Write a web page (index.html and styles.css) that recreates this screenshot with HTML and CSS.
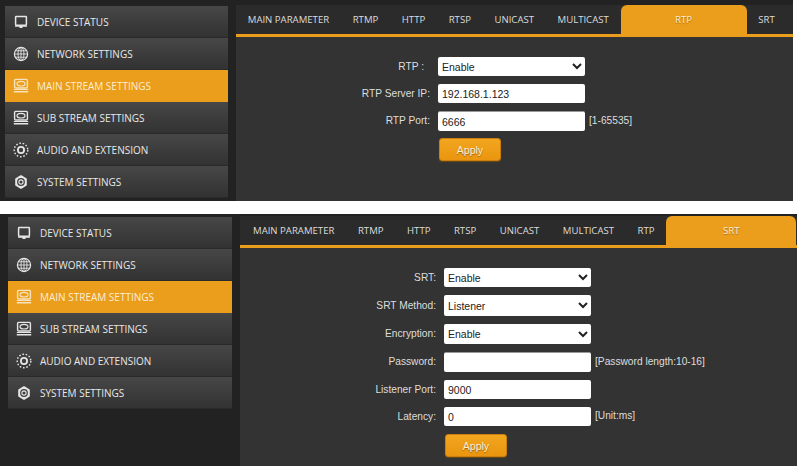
FILE: index.html
```html
<!DOCTYPE html>
<html lang="en">
<head>
<meta charset="utf-8">
<title>Stream settings</title>
<link rel="stylesheet" href="styles.css">
</head>
<body>
<svg class="defs" width="0" height="0" aria-hidden="true">
  <symbol id="i-monitor" viewBox="0 0 16 16">
    <rect x="2.6" y="2.6" width="10.8" height="8.6" rx="0.6" fill="none" stroke="currentColor" stroke-width="1.5"/>
    <path d="M2 11.4h12v1.4H9.5v1.2h-3v-1.2H2z" fill="currentColor"/>
  </symbol>
  <symbol id="i-globe" viewBox="0 0 16 16">
    <g fill="none" stroke="currentColor" stroke-width="0.9">
      <circle cx="8" cy="8" r="6.6" stroke-width="1.2"/>
      <ellipse cx="8" cy="8" rx="3" ry="6.6"/>
      <path d="M8 1.4v13.2M1.4 8h13.2M2.4 4.8h11.2M2.4 11.2h11.2"/>
    </g>
  </symbol>
  <symbol id="i-stream" viewBox="0 0 16 16">
    <rect x="1.6" y="1.4" width="12.8" height="8.6" rx="1" fill="none" stroke="currentColor" stroke-width="1.4"/>
    <ellipse cx="8" cy="5.7" rx="4" ry="2.3" fill="none" stroke="currentColor" stroke-width="1.2"/>
    <path d="M.8 11h14.4v1H.8zM.8 13h14.4v1.5H.8z" fill="currentColor"/>
  </symbol>
  <symbol id="i-audio" viewBox="0 0 16 16">
    <circle cx="8" cy="8" r="3.1" fill="none" stroke="currentColor" stroke-width="1.8"/>
    <circle cx="8" cy="8" r="6.8" fill="none" stroke="currentColor" stroke-width="1.4" stroke-dasharray="1.6 1.75"/>
  </symbol>
  <symbol id="i-gear" viewBox="0 0 16 16">
    <path d="M8 2.2l4.8 2.8v6L8 13.8 3.2 11V5z" fill="currentColor" stroke="currentColor" stroke-width="2" stroke-linejoin="round"/>
    <circle cx="8" cy="8" r="3.9" fill="#3d3d3d"/>
    <circle cx="8" cy="8" r="2.1" fill="none" stroke="currentColor" stroke-width="1.1"/>
  </symbol>
</svg>

<section class="panel panel-rtp">
  <nav class="side">
    <a class="side-item"><svg class="ico"><use href="#i-monitor"/></svg>DEVICE STATUS</a>
    <a class="side-item"><svg class="ico"><use href="#i-globe"/></svg>NETWORK SETTINGS</a>
    <a class="side-item active"><svg class="ico"><use href="#i-stream"/></svg>MAIN STREAM SETTINGS</a>
    <a class="side-item"><svg class="ico"><use href="#i-stream"/></svg>SUB STREAM SETTINGS</a>
    <a class="side-item"><svg class="ico"><use href="#i-audio"/></svg>AUDIO AND EXTENSION</a>
    <a class="side-item"><svg class="ico"><use href="#i-gear"/></svg>SYSTEM SETTINGS</a>
  </nav>
  <div class="main">
    <div class="tabs">
      <a class="tab">MAIN PARAMETER</a>
      <a class="tab">RTMP</a>
      <a class="tab">HTTP</a>
      <a class="tab">RTSP</a>
      <a class="tab">UNICAST</a>
      <a class="tab">MULTICAST</a>
      <a class="tab current">RTP</a>
      <a class="tab">SRT</a>
    </div>
    <form class="form">
      <label class="lab lab-short">RTP :</label>
      <div class="ctl"><select class="field"><option>Enable</option></select></div>
      <label class="lab">RTP Server IP:</label>
      <div class="ctl"><input class="field" value="192.168.1.123"></div>
      <label class="lab">RTP Port:</label>
      <div class="ctl"><input class="field h20 shade" value="6666"><span class="hint">[1-65535]</span></div>
      <div class="ctl apply-cell"><button type="button" class="apply">Apply</button></div>
    </form>
  </div>
</section>

<section class="panel panel-srt">
  <nav class="side">
    <a class="side-item"><svg class="ico"><use href="#i-monitor"/></svg>DEVICE STATUS</a>
    <a class="side-item"><svg class="ico"><use href="#i-globe"/></svg>NETWORK SETTINGS</a>
    <a class="side-item active"><svg class="ico"><use href="#i-stream"/></svg>MAIN STREAM SETTINGS</a>
    <a class="side-item"><svg class="ico"><use href="#i-stream"/></svg>SUB STREAM SETTINGS</a>
    <a class="side-item"><svg class="ico"><use href="#i-audio"/></svg>AUDIO AND EXTENSION</a>
    <a class="side-item"><svg class="ico"><use href="#i-gear"/></svg>SYSTEM SETTINGS</a>
  </nav>
  <div class="main">
    <div class="tabs">
      <a class="tab">MAIN PARAMETER</a>
      <a class="tab">RTMP</a>
      <a class="tab">HTTP</a>
      <a class="tab">RTSP</a>
      <a class="tab">UNICAST</a>
      <a class="tab">MULTICAST</a>
      <a class="tab">RTP</a>
      <a class="tab current">SRT</a>
    </div>
    <form class="form">
      <label class="lab">SRT:</label>
      <div class="ctl"><select class="field"><option>Enable</option></select></div>
      <label class="lab">SRT Method:</label>
      <div class="ctl"><select class="field h21"><option>Listener</option></select></div>
      <label class="lab">Encryption:</label>
      <div class="ctl"><select class="field h20"><option>Enable</option></select></div>
      <label class="lab">Password:</label>
      <div class="ctl"><input class="field h20 shade" value=""><span class="hint">[Password length:10-16]</span></div>
      <label class="lab">Listener Port:</label>
      <div class="ctl"><input class="field" value="9000"></div>
      <label class="lab">Latency:</label>
      <div class="ctl"><input class="field" value="0"><span class="hint">[Unit:ms]</span></div>
      <div class="ctl apply-cell"><button type="button" class="apply">Apply</button></div>
    </form>
  </div>
</section>
</body>
</html>
```

FILE: styles.css
```css
* { box-sizing: border-box; }
html, body { margin: 0; padding: 0; background: #fff; }
body { width: 797px; height: 467px; overflow: hidden; }
.defs { position: absolute; }

.panel { display: flex; background: #222; color: #e4e4e4; }
.panel-rtp { width: 793px; height: 201px; padding: 5px 0 0 5px; margin-bottom: 13px; }
.panel-srt { width: 797px; height: 252px; padding: 2px 0 0 8px; }

.side { height: 192px; margin-top: 1px; margin-right: 8px; flex: none; display: flex; flex-direction: column; }
.panel-rtp .side { width: 223px; }
.panel-srt .side { width: 224px; }
.side-item {
  height: 32px; display: flex; align-items: center;
  padding: 1px 0 0 8px; color: #e8e8e8;
  font: 10px/1 "Open Sans", "Liberation Sans", sans-serif;
  background: linear-gradient(#474747, #323232);
  border-bottom: 1px solid #2a2a2a;
}
.side-item.active { background: #eb9d1c; border-bottom-color: #eb9d1c; color: #fbeed4; }
.ico { width: 16px; height: 16px; margin-right: 8px; flex: none; color: #e6e6e6; }
.active .ico { color: #f6e3bd; }

.main { flex: 1; background: #333; min-width: 0; }
.tabs {
  display: flex; height: 32px; background: #2b2b2b;
  border-bottom: 3.5px solid #eb9d1c;
}
.tab {
  padding: 1px 11.75px 0; height: 28px; display: flex; align-items: center;
  font: 9.6px/1 "Open Sans", "Liberation Sans", sans-serif; color: #dcdcdc; white-space: nowrap;
}
.panel-srt .tab:first-child { padding-left: 13px; }
.tab.current {
  background: #eb9d1c; color: #fbeed4; height: 32px; justify-content: center;
  border-radius: 6px 6px 0 0; padding-bottom: 3px; text-shadow: 0 1px 1px rgba(130, 80, 0, .6);
}
.panel-rtp .tab.current { width: 126px; }
.panel-srt .tab.current { width: 130px; }

.form {
  display: grid; column-gap: 8px; row-gap: 8px; align-items: center; padding-top: 20px;
  font: 10.2px/1 "Liberation Sans", sans-serif; color: #dedede;
}
.panel-rtp .form { grid-template-columns: 194px 1fr; }
.panel-srt .form { grid-template-columns: 196px 1fr; }
.lab { text-align: right; padding-top: 1px; }
.lab-short { padding-right: 6px; }
.ctl { display: flex; align-items: center; }
.field {
  width: 147px; height: 19px; padding: 0 0 0 4px; border: 0; border-radius: 2px;
  background: #fff; color: #222; font: 10.5px "Liberation Sans", sans-serif;
}
select.field { padding-left: 0; }
.h20 { height: 20px; }
.h21 { height: 21px; }
.shade { border-top: 1px solid #999; }
.hint { margin-left: 4px; }
.apply-cell { grid-column: 2; }
.panel-rtp .apply-cell { margin-top: -1px; }
.apply {
  width: 62px; height: 23px; margin-left: 1px; padding: 0; border: 1px solid #c9800f; border-radius: 3px;
  background: linear-gradient(#f2a61f, #ea9510); color: #fdf0d5;
  font: 10.5px "Liberation Sans", sans-serif; box-shadow: 0 1px 1px #6b4a14;
  text-shadow: 0 1px 1px rgba(120, 70, 0, .7);
}
```
